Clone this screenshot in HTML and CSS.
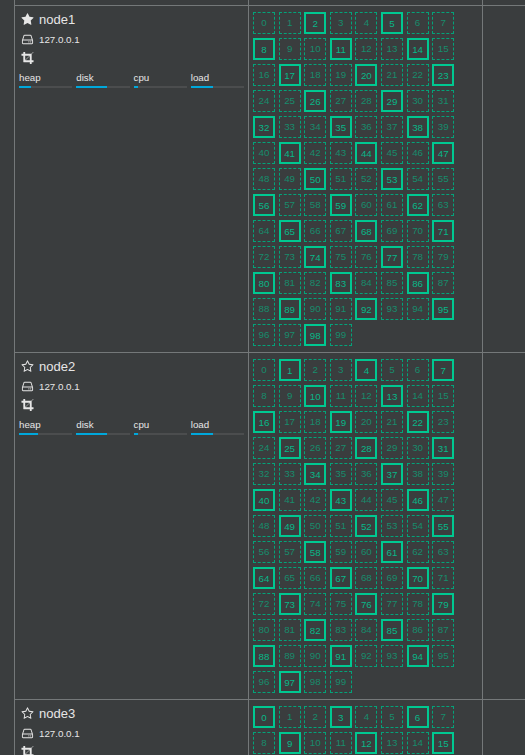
FILE: index.html
```html
<!DOCTYPE html>
<html lang="en">
<head>
<meta charset="utf-8">
<title>Cluster overview</title>
<link rel="stylesheet" href="styles.css">
</head>
<body>
<svg class="sprite" aria-hidden="true">
  <symbol id="star" viewBox="0 0 1792 1792"><path d="M1728 647q0 22-26 48l-363 354 86 500q1 7 1 20 0 21-10.5 35.5t-30.5 14.5q-19 0-40-12l-449-236-449 236q-22 12-40 12-21 0-31.5-14.5t-10.5-35.5q0-6 2-20l86-500-364-354q-25-27-25-48 0-37 56-46l502-73 225-455q19-41 49-41t49 41l225 455 502 73q56 9 56 46z"/></symbol>
  <symbol id="star-o" viewBox="0 0 1792 1792"><path d="M1201 1004l306-297-422-62-189-382-189 382-422 62 306 297-73 421 378-199 377 199zm527-357q0 22-26 48l-363 354 86 500q1 7 1 20 0 50-41 50-19 0-40-12l-449-236-449 236q-22 12-40 12-21 0-31.5-14.5t-10.5-35.5q0-6 2-20l86-500-364-354q-25-27-25-48 0-37 56-46l502-73 225-455q19-41 49-41t49 41l225 455 502 73q56 9 56 46z"/></symbol>
  <symbol id="hdd" viewBox="0 0 1792 1792"><path d="M1168 1216q0 33-23.5 56.5t-56.5 23.5-56.5-23.5-23.5-56.5 23.5-56.5 56.5-23.5 56.5 23.5 23.5 56.5zm256 0q0 33-23.5 56.5t-56.5 23.5-56.5-23.5-23.5-56.5 23.5-56.5 56.5-23.5 56.5 23.5 23.5 56.5zm112 160v-320q0-13-9.5-22.5t-22.5-9.5h-1216q-13 0-22.5 9.5t-9.5 22.5v320q0 13 9.5 22.5t22.5 9.5h1216q13 0 22.5-9.5t9.5-22.5zm-1230-480h1180l-157-482q-4-13-16-21.5t-26-8.5h-782q-14 0-26 8.5t-16 21.5zm1358 160v320q0 66-47 113t-113 47h-1216q-66 0-113-47t-47-113v-320q0-25 16-75l197-606q17-53 63-86t101-33h782q55 0 101 33t63 86l197 606q16 50 16 75z"/></symbol>
  <symbol id="crop" viewBox="0 0 1792 1792"><path d="M621 1280h595v-595zm-45-45l595-595h-595v595zm1152 77v192q0 14-9 23t-23 9h-224v224q0 14-9 23t-23 9h-192q-14 0-23-9t-9-23v-224h-864q-14 0-23-9t-9-23v-864h-224q-14 0-23-9t-9-23v-192q0-14 9-23t23-9h224v-224q0-14 9-23t23-9h192q14 0 23 9t9 23v224h851l246-247q10-9 23-9t23 9q9 10 9 23t-9 23l-247 246v851h224q14 0 23 9t9 23z"/></symbol>
</svg>
<main class="nodes" id="nodes">
  <div class="row head"><div class="cell"></div><div class="cell"></div><div class="cell"></div></div>
</main>
<script src="nodes.js"></script>
</body>
</html>
```
FILE: styles.css
```css
* { box-sizing: border-box; }

body {
  margin: 0;
  height: 755px;
  overflow: hidden;
  background: #3a3d3e;
  color: #e6e6e6;
  font-family: "Liberation Sans", Arial, sans-serif;
  font-size: 13px;
}

.sprite { display: none; }

.nodes { margin-left: 14px; }

.row {
  display: grid;
  grid-template-columns: 234px 234px 1fr;
  height: 347px;
  border-top: 1px solid #747879;
}

.head { height: 5px; border-top: 0; }

.cell { border-left: 1px solid #747879; }

.info { padding: 4px 4px 0; }

.line {
  display: flex;
  align-items: center;
  gap: 5px;
  height: 19px;
  padding-left: 2px;
}

.icon {
  width: 13px;
  height: 13px;
  fill: currentColor;
}

.name { font-size: 13px; }

.ip { height: 20px; font-size: 9.75px; }

.tools { height: 16px; }

.stats {
  display: grid;
  grid-template-columns: repeat(4, 1fr);
  gap: 4px;
  margin-top: 6px;
}

.stat {
  font-size: 9.75px;
  line-height: 13px;
}

.bar {
  height: 2px;
  margin-top: 2px;
  background: #4b4d4e;
}

.fill { height: 2px; background: #00a8dc; }

.shards {
  display: grid;
  grid-template-columns: repeat(8, 22px);
  grid-auto-rows: 22px;
  gap: 4px 3.6px;
  align-content: start;
  padding: 6px 0 0 4px;
}

.shard {
  font-size: 9.75px;
  line-height: 20px;
  text-align: center;
}

.replica {
  border: 1px dashed #04a279;
  color: #178c6c;
}

.primary {
  border: 2px solid #00c891;
  color: #08b788;
}
```
FILE: nodes.js
```js
const SHARDS = 100;
const nodes = [
  { name: "node1", icon: "star", primary: 2, heap: 22.5 },
  { name: "node2", icon: "star-o", primary: 1, heap: 35.5 },
  { name: "node3", icon: "star-o", primary: 0, heap: 30 }
];

const icon = id => `<svg class="icon"><use href="#${id}"/></svg>`;

const stat = (label, value) =>
  `<div class="stat">${label}<div class="bar"><div class="fill" style="width:${value}%"></div></div></div>`;

const shard = (i, primary) =>
  `<div class="shard ${i % 3 === primary ? "primary" : "replica"}">${i}</div>`;

document.getElementById("nodes").insertAdjacentHTML("beforeend", nodes.map(n => `
  <section class="row">
    <div class="cell info">
      <div class="line name">${icon(n.icon)}<span>${n.name}</span></div>
      <div class="line ip">${icon("hdd")}<span>127.0.0.1</span></div>
      <div class="line tools">${icon("crop")}</div>
      <div class="stats">${stat("heap", n.heap)}${stat("disk", 58)}${stat("cpu", 9)}${stat("load", 41)}</div>
    </div>
    <div class="cell shards">${Array.from({ length: n.name === "node3" ? 16 : SHARDS }, (_, i) => shard(i, n.primary)).join("")}</div>
    <div class="cell"></div>
  </section>`).join(""));
```
